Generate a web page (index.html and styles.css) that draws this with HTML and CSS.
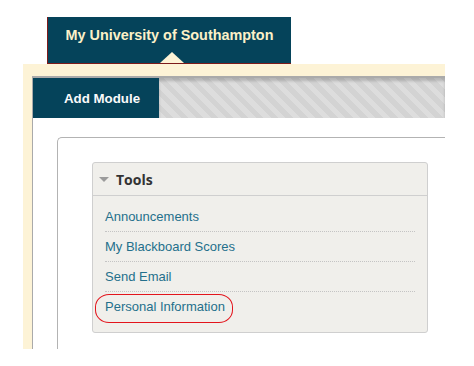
FILE: index.html
```html
<!DOCTYPE html>
<html lang="en">
<head>
  <meta charset="UTF-8" />
  <meta name="viewport" content="width=device-width, initial-scale=1.0" />
  <title>My University of Southampton</title>
  <link rel="stylesheet" href="styles.css">
</head>
<body>
  <div class="topnav">
    <div class="main-tab">
      My University of Southampton
      <span class="tab-arrow"></span>
    </div>
  </div>

  <div class="frame">
    <div class="inner">
      <div class="tabbar">
        <div class="add-module">Add Module</div>
        <div class="stripes"></div>
      </div>

      <div class="content">
        <div class="column">
          <div class="module">
            <div class="module-header">
              <span class="collapse"></span>
              <h2>Tools</h2>
            </div>
            <ul class="tool-list">
              <li><a href="#">Announcements</a></li>
              <li><a href="#">My Blackboard Scores</a></li>
              <li><a href="#">Send Email</a></li>
              <li class="marked"><a href="#">Personal Information</a><span class="circle"></span></li>
            </ul>
          </div>
        </div>
      </div>
    </div>
  </div>
</body>
</html>
```

FILE: styles.css
```css
body {
  margin: 0;
  padding: 0;
  background: #fff;
  font-family: "Liberation Sans", Arial, sans-serif;
}

.topnav {
  padding: 17px 0 0 47px;
}

.main-tab {
  position: relative;
  width: 243px;
  height: 46px;
  line-height: 37px;
  background: #05435a;
  border-left: 1px solid #7d1a1a;
  border-bottom: 1px solid #7d1a1a;
  color: #fcf1c8;
  font-size: 14.4px;
  font-weight: bold;
  text-align: center;
}

.tab-arrow {
  position: absolute;
  bottom: 0;
  left: 112px;
  width: 0;
  height: 0;
  border-left: 12px solid transparent;
  border-right: 12px solid transparent;
  border-bottom: 11px solid #fdf3d6;
}

.frame {
  width: 413px;
  height: 273px;
  margin-left: 23px;
  padding: 12px 0 0 9px;
  background: #fdf3d6;
  overflow: hidden;
}

.inner {
  height: 100%;
  background: #fff;
  border-top: 2px solid #aaa;
  border-left: 1px solid #aaa;
}

.tabbar {
  display: flex;
  height: 40px;
}

.add-module {
  width: 95px;
  padding-left: 31px;
  background: #05435a;
  color: #fafafa;
  font-size: 13.3px;
  font-weight: bold;
  line-height: 41px;
}

.stripes {
  flex: 1;
  background: repeating-linear-gradient(45deg, #dddddd 0 5px, #d3d3d3 5px 10.6px);
  box-shadow: inset 0 3px 3px rgba(0, 0, 0, 0.18);
}

.content {
  padding: 19px 0 0 24px;
}

.column {
  height: 300px;
  padding: 24px 0 0 34px;
  border-top: 1px solid #b3b3b3;
  border-left: 1px solid #b3b3b3;
  border-top-left-radius: 5px;
}

.module {
  width: 334px;
  background: #f0efeb;
  border: 1px solid #cfcfcf;
  border-radius: 3px;
}

.module-header {
  display: flex;
  align-items: center;
  height: 32px;
  padding-left: 6px;
  border-bottom: 1px solid #cfcfcf;
}

.collapse {
  width: 0;
  height: 0;
  margin: 1px 7px 0 0;
  border-left: 5px solid transparent;
  border-right: 5px solid transparent;
  border-top: 5px solid #9b9b9b;
}

.module-header h2 {
  margin: 0;
  font-family: "Open Sans", sans-serif;
  font-size: 14px;
  font-weight: bold;
  color: #333;
}

.tool-list {
  list-style: none;
  margin: 0;
  padding: 6px 12px 11px;
}

.tool-list li {
  position: relative;
  height: 29px;
  line-height: 29px;
  border-bottom: 1px dotted #c4c4c4;
  font-size: 13px;
}

.tool-list li:last-child {
  border-bottom: none;
}

.tool-list a {
  color: #246f8b;
  text-decoration: none;
}

.circle {
  position: absolute;
  left: -10px;
  top: 2px;
  width: 136px;
  height: 27px;
  border: 1px solid #e3141c;
  border-radius: 14px / 13px;
}
```
